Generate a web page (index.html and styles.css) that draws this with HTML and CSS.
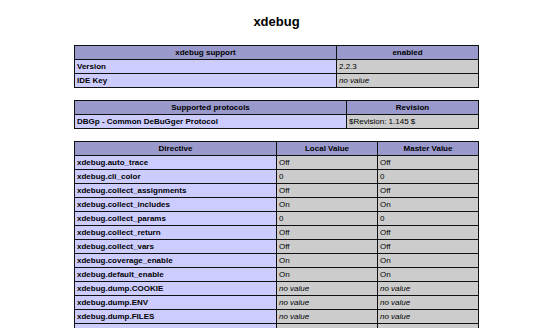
FILE: index.html
```html
<!DOCTYPE html>
<html>
<head>
<meta charset="utf-8">
<link rel="stylesheet" href="styles.css">
</head>
<body>
<div class="center">
<h2 class="title">xdebug</h2>
<table class="t1">
<colgroup><col class="c1a"><col></colgroup>
<tr class="h"><th>xdebug support</th><th>enabled</th></tr>
<tr><td class="e">Version </td><td class="v">2.2.3 </td></tr>
<tr><td class="e">IDE Key </td><td class="v"><i>no value</i> </td></tr>
</table>
<table class="t2">
<colgroup><col class="c2a"><col></colgroup>
<tr class="h"><th>Supported protocols</th><th>Revision</th></tr>
<tr><td class="e">DBGp - Common DeBuGger Protocol </td><td class="v">$Revision: 1.145 $ </td></tr>
</table>
<table class="t3">
<colgroup><col class="c3a"><col class="c3b"><col></colgroup>
<tr class="h"><th>Directive</th><th>Local Value</th><th>Master Value</th></tr>
<tr><td class="e">xdebug.auto_trace</td><td class="v">Off</td><td class="v">Off</td></tr>
<tr><td class="e">xdebug.cli_color</td><td class="v">0</td><td class="v">0</td></tr>
<tr><td class="e">xdebug.collect_assignments</td><td class="v">Off</td><td class="v">Off</td></tr>
<tr><td class="e">xdebug.collect_includes</td><td class="v">On</td><td class="v">On</td></tr>
<tr><td class="e">xdebug.collect_params</td><td class="v">0</td><td class="v">0</td></tr>
<tr><td class="e">xdebug.collect_return</td><td class="v">Off</td><td class="v">Off</td></tr>
<tr><td class="e">xdebug.collect_vars</td><td class="v">Off</td><td class="v">Off</td></tr>
<tr><td class="e">xdebug.coverage_enable</td><td class="v">On</td><td class="v">On</td></tr>
<tr><td class="e">xdebug.default_enable</td><td class="v">On</td><td class="v">On</td></tr>
<tr><td class="e">xdebug.dump.COOKIE</td><td class="v"><i>no value</i></td><td class="v"><i>no value</i></td></tr>
<tr><td class="e">xdebug.dump.ENV</td><td class="v"><i>no value</i></td><td class="v"><i>no value</i></td></tr>
<tr><td class="e">xdebug.dump.FILES</td><td class="v"><i>no value</i></td><td class="v"><i>no value</i></td></tr>
<tr><td class="e">&nbsp;</td><td class="v">&nbsp;</td><td class="v">&nbsp;</td></tr>
</table>
</div>
</body>
</html>
```
FILE: styles.css
```css
html, body {
  margin: 0;
  padding: 0;
  background: #fff;
  color: #000;
  font-family: "Liberation Sans", Arial, sans-serif;
}
.center {
  display: flex;
  flex-direction: column;
  align-items: center;
  padding-top: 14px;
}
.title {
  margin: 0 0 16px;
  font-size: 13px;
  line-height: 15px;
  font-weight: bold;
  text-align: center;
}
table {
  border-collapse: collapse;
  table-layout: fixed;
  width: 405px;
  margin-bottom: 12px;
}
th, td {
  border: 1px solid #111;
  font-size: 8px;
  line-height: 13px;
  padding: 0 2px;
  vertical-align: middle;
  overflow: hidden;
  white-space: nowrap;
}
.h { background-color: #9999cc; }
.h th { text-align: center; font-weight: bold; }
.e { background-color: #ccccff; font-weight: bold; text-align: left; }
.v { background-color: #cccccc; text-align: left; }
.c1a { width: 262px; }
.c2a { width: 272px; }
.c3a { width: 202px; }
.c3b { width: 101px; }
```
